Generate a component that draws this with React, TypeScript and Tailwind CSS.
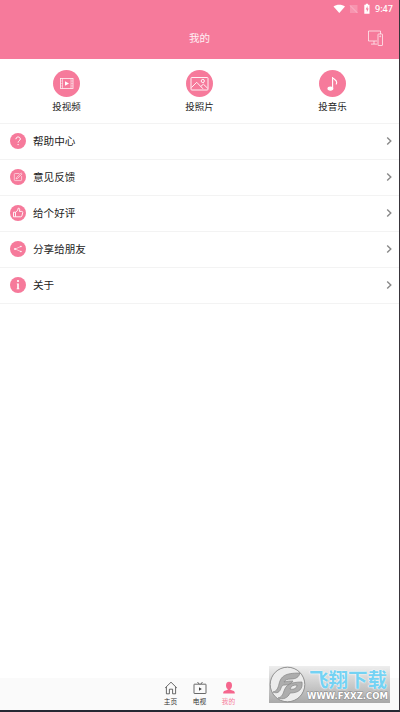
import type React from "react"

interface ItemProps {
  icon: React.ReactNode
  label: string
}

const actions: ItemProps[] = [
  {
    label: "投视频",
    icon: (
      <svg viewBox="0 0 27 27" className="size-[27px]" fill="none" stroke="#fff" strokeWidth="0.8" strokeOpacity="0.9">
        <rect x="7.5" y="8.5" width="12.5" height="10" />
        <path d="M9.5 8.5v10M18 8.5v10" strokeWidth="0.6" />
        <path d="M7.5 11h2M7.5 13.5h2M7.5 16h2M18 11h2M18 13.5h2M18 16h2" strokeWidth="0.4" />
        <path d="M12 11.2v4.6l4-2.3z" fill="#fff" stroke="none" />
      </svg>
    ),
  },
  {
    label: "投照片",
    icon: (
      <svg viewBox="0 0 27 27" className="size-[27px]" fill="none" stroke="#fff" strokeWidth="0.9" strokeLinejoin="round">
        <rect x="5" y="7.5" width="17" height="12.5" rx="0.8" />
        <circle cx="16.8" cy="11" r="1.6" />
        <path d="M5.5 17.5l5.2-5.2 6.3 6.5M14.8 16.4l2.6-2.2 4.2 4" />
      </svg>
    ),
  },
  {
    label: "投音乐",
    icon: (
      <svg viewBox="0 0 27 27" className="size-[27px]" fill="none" stroke="#fff" strokeWidth="1.1">
        <ellipse cx="11.4" cy="18.6" rx="2.4" ry="1.5" fill="#fff" />
        <path d="M13.6 18.5V7c.6 2.6 4 2.7 4.1 5.4 0 .9-.3 1.5-.8 2" />
      </svg>
    ),
  },
]

const rows: ItemProps[] = [
  {
    label: "帮助中心",
    icon: (
      <svg viewBox="0 0 16 16" className="size-4" fill="none" stroke="#fff" strokeWidth="1">
        <path d="M5.9 6.2c0-3 4.4-2.9 4.4-.2 0 1.7-2.2 1.8-2.2 3.6" />
        <circle cx="8.1" cy="11.6" r="0.7" fill="#fff" stroke="none" />
      </svg>
    ),
  },
  {
    label: "意见反馈",
    icon: (
      <svg viewBox="0 0 16 16" className="size-4" fill="none" stroke="#fff" strokeWidth="0.7" strokeOpacity="0.8">
        <path d="M9.4 4.5H5.2c-.5 0-.9.3-.9.8v5.5c0 .5.4.8.9.8h5.6c.5 0 .8-.3.8-.8V7" />
        <path d="M11.2 4l.9.9-4.5 4.5-1.5.5.5-1.4z" />
      </svg>
    ),
  },
  {
    label: "给个好评",
    icon: (
      <svg viewBox="0 0 16 16" className="size-4" fill="none" stroke="#fff" strokeWidth="0.9" strokeLinejoin="round">
        <path d="M3.5 7.2h2v4.6h-2zM5.5 7.4l2.2-2.2.5-2c1.6-.3 1.9 1 1.2 3.2h2.3c.8 0 1.2.6 1 1.3l-.8 3.2c-.1.5-.5.9-1.1.9H5.5" />
      </svg>
    ),
  },
  {
    label: "分享给朋友",
    icon: (
      <svg viewBox="0 0 16 16" className="size-4" fill="none" stroke="#fff" strokeWidth="0.7" strokeOpacity="0.85">
        <path d="M10.6 5.6L5.2 8l5.4 2.4" />
        <circle cx="10.9" cy="5.5" r="0.5" fill="#fff" />
        <circle cx="5" cy="8" r="0.7" fill="#fff" />
        <circle cx="10.9" cy="10.5" r="0.5" fill="#fff" />
      </svg>
    ),
  },
  {
    label: "关于",
    icon: (
      <svg viewBox="0 0 16 16" className="size-4" fill="#fff">
        <circle cx="8" cy="4" r="1.1" />
        <path d="M6.8 6.4h2v5h.6v.8H6.6v-.8h.6V7.2h-.4z" />
      </svg>
    ),
  },
]

function StatusBar() {
  return (
    <div className="flex h-[17px] items-center justify-end pr-[5px]">
      <svg viewBox="0 0 42 16" className="h-4 w-[42px]" fill="#fff">
        <path d="M.5 5.5C3.5 3 9 3 12 5.5L6.3 12z" />
        <path d="M17 4h7.5v8H17z" opacity="0.2" />
        <path d="M17 4.5l7.5 7.5" stroke="#fff" strokeWidth="0.9" opacity="0.35" />
        <path d="M31.3 3.8h1.5v-1H35v1h1.5v9h-5.2z" />
        <path d="M34.5 5l-1.8 3.5h1.2v2.7l1.8-3.6h-1.2z" fill="#f67a9b" />
      </svg>
      <span className="w-[19px] whitespace-nowrap font-['Noto_Sans',sans-serif] text-[9px] leading-none font-medium">
        9:47
      </span>
    </div>
  )
}

function Header() {
  return (
    <header className="h-[59px] bg-[#f67a9b] text-white">
      <StatusBar />
      <div className="grid h-[42px] grid-cols-3 items-center">
        <span />
        <h1 className="text-center text-[10.5px] leading-4 text-white/90">我的</h1>
        <svg viewBox="0 0 18 18" className="mr-[15px] size-[18px] justify-self-end" fill="none" stroke="#fff" strokeWidth="0.8" strokeOpacity="0.85">
          <path d="M11 12H2.5V2h12v3M5 15.1h6M8 12v3" />
          <rect x="12" y="5" width="4.5" height="11.5" rx="0.5" />
          <circle cx="14.2" cy="7.3" r="0.5" />
        </svg>
      </div>
    </header>
  )
}

function Watermark() {
  return (
    <div className="absolute top-[666px] left-[269px] flex h-[37px] w-[121px] bg-linear-to-b from-[#eeeeee] to-[#a9a9a9]">
      <svg viewBox="0 0 37 37" className="size-[37px] shrink-0">
        <circle cx="18.5" cy="18.5" r="17.3" fill="#ececec" stroke="#909090" strokeWidth="1" />
        {/* Two swept strokes forming the emblem */}
        <path
          d="M4 26c4-1 5-4 6-8C12 10 16 7 31 7c-1 4-4 6-9 6-4 0-6 1-7 3 3-1 6-1 9-1-2 3-4 4-8 4-3 0-3 1-4 3-1 4-4 6-8 4z"
          fill="#adadad"
          stroke="#858585"
          strokeWidth="0.7"
        />
        <path
          d="M9 32c4-1 5-4 6-7 2-6 6-9 18-9 1 7-3 11-12 11-2 5-7 7-12 5zM21 23c4 1 7-1 7-4-4 0-6 1-7 4z"
          fill="#adadad"
          fillRule="evenodd"
          stroke="#858585"
          strokeWidth="0.7"
        />
      </svg>
      <div className="flex w-[84px] flex-col items-center">
        <span className="mt-[2px] h-[22px] whitespace-nowrap text-[19.5px] leading-[22px] font-bold text-[#74d2f3] [text-shadow:0_0_1px_#fff,0_0_2px_#fff]">
          飞翔下载
        </span>
        <svg viewBox="0 0 84 11" className="h-[11px] w-[84px]">
          <text
            x="1"
            y="9"
            textLength="81"
            lengthAdjust="spacingAndGlyphs"
            fontFamily="DejaVu Sans, sans-serif"
            fontSize="8"
            fontWeight="700"
            fill="#fff"
            stroke="#8a8a8a"
            strokeWidth="1"
            paintOrder="stroke"
          >
            WWW.FXXZ.COM
          </text>
        </svg>
      </div>
    </div>
  )
}

function TabBar() {
  return (
    <nav className="mt-auto flex h-8 justify-center gap-[9px] bg-[#fafafa] pt-[3px] text-[6.7px] leading-[9px] text-[#333]">
      <a className="flex w-5 flex-col items-center">
        <svg viewBox="0 0 14 14" className="size-[14px]" fill="none" stroke="#444" strokeWidth="0.8" strokeLinejoin="round">
          <path d="M1.2 6.9L7 1.2l5.8 5.7M2.4 6v6.8h3V8.2h3.2v4.6h3V6" />
        </svg>
        <span className="mt-[2px] whitespace-nowrap">主页</span>
      </a>
      <a className="flex w-5 flex-col items-center">
        <svg viewBox="0 0 14 14" className="size-[14px]" fill="none" stroke="#444" strokeWidth="0.8">
          <rect x="1" y="3.2" width="12" height="9.3" rx="0.4" />
          <path d="M4.5 1l1.8 2.2M9.5 1L7.7 3.2" />
          <path d="M6 6.2v3.5l2.8-1.8z" fill="#444" stroke="none" />
        </svg>
        <span className="mt-[2px] whitespace-nowrap">电视</span>
      </a>
      <a className="flex w-5 flex-col items-center text-[#f67a9b]">
        <svg viewBox="0 0 14 14" className="size-[14px]" fill="#f5668d">
          <ellipse cx="7" cy="4.4" rx="3" ry="3.6" />
          <path d="M5.7 7h2.6v1.7l3.5 1.3c.8.4 1 1.2 1 2.5H1.2c0-1.3.2-2.1 1-2.5l3.5-1.3z" />
        </svg>
        <span className="mt-[2px] whitespace-nowrap">我的</span>
      </a>
    </nav>
  )
}

export default function App() {
  return (
    <div className="relative flex h-[712px] w-[400px] flex-col overflow-hidden border-r border-r-[#38343a] border-b-2 border-b-[#252833] bg-white font-['Noto_Sans_CJK_SC',sans-serif] text-[#222]">
      <Header />

      {/* Cast shortcuts */}
      <div className="grid h-[65px] shrink-0 grid-cols-3 border-b border-[#f3f3f3] pt-[11px]">
        {actions.map((action) => (
          <div key={action.label} className="flex flex-col items-center">
            <div className="rounded-full bg-[#f67a9b]">{action.icon}</div>
            <span className="mt-[2px] text-[9.5px] leading-[14px]">{action.label}</span>
          </div>
        ))}
      </div>

      {/* Settings */}
      <ul>
        {rows.map((row) => (
          <li key={row.label} className="flex h-9 items-center border-b border-[#f3f3f3] pr-[6px] pb-px pl-[10px]">
            <div className="rounded-full bg-[#f67a9b]">{row.icon}</div>
            <span className="ml-[7px] text-[10.6px] leading-4">{row.label}</span>
            <svg viewBox="0 0 8 10" className="ml-auto h-[10px] w-2" fill="none" stroke="#888" strokeWidth="1.4">
              <path d="M2.2 1.5L5.8 5 2.2 8.5" />
            </svg>
          </li>
        ))}
      </ul>

      <TabBar />
      <Watermark />
    </div>
  )
}
